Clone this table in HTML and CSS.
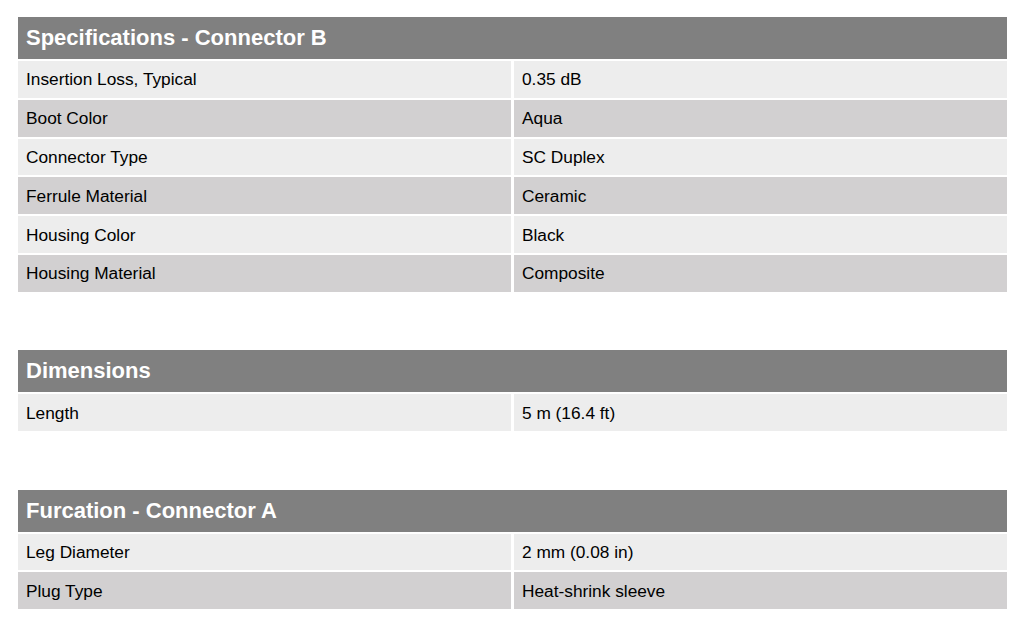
FILE: index.html
```html
<!DOCTYPE html>
<html>
<head>
<meta charset="utf-8">
<link rel="stylesheet" href="styles.css">
</head>
<body>
<div class="page">
  <section class="spec">
    <div class="spec-head">Specifications - Connector B</div>
    <div class="row light"><div class="cell">Insertion Loss, Typical</div><div class="cell">0.35 dB</div></div>
    <div class="row dark"><div class="cell">Boot Color</div><div class="cell">Aqua</div></div>
    <div class="row light"><div class="cell">Connector Type</div><div class="cell">SC Duplex</div></div>
    <div class="row dark"><div class="cell">Ferrule Material</div><div class="cell">Ceramic</div></div>
    <div class="row light"><div class="cell">Housing Color</div><div class="cell">Black</div></div>
    <div class="row dark"><div class="cell">Housing Material</div><div class="cell">Composite</div></div>
  </section>
  <section class="spec">
    <div class="spec-head">Dimensions</div>
    <div class="row light"><div class="cell">Length</div><div class="cell">5 m (16.4 ft)</div></div>
  </section>
  <section class="spec">
    <div class="spec-head">Furcation - Connector A</div>
    <div class="row light"><div class="cell">Leg Diameter</div><div class="cell">2 mm (0.08 in)</div></div>
    <div class="row dark"><div class="cell">Plug Type</div><div class="cell">Heat-shrink sleeve</div></div>
  </section>
</div>
</body>
</html>
```
FILE: styles.css
```css
html, body {
  margin: 0;
  padding: 0;
  background: #ffffff;
}
body {
  font-family: "Liberation Sans", Arial, sans-serif;
  color: #000000;
}
.page {
  padding: 17px 17px 0 18px;
  display: flex;
  flex-direction: column;
  gap: 58.5px;
}
.spec {
  display: flex;
  flex-direction: column;
  gap: 2px;
}
.spec-head {
  height: 42px;
  background: #808080;
  color: #ffffff;
  font-weight: bold;
  font-size: 22px;
  display: flex;
  align-items: center;
  padding-left: 8px;
  box-sizing: border-box;
}
.row {
  display: grid;
  grid-template-columns: 1fr 1fr;
  column-gap: 3px;
  height: 36.8px;
}
.cell {
  display: flex;
  align-items: center;
  padding-left: 8px;
  padding-top: 1px;
  font-size: 17.3px;
}
.row.light .cell {
  background: #ededed;
}
.row.dark .cell {
  background: #d2d0d1;
}
```
